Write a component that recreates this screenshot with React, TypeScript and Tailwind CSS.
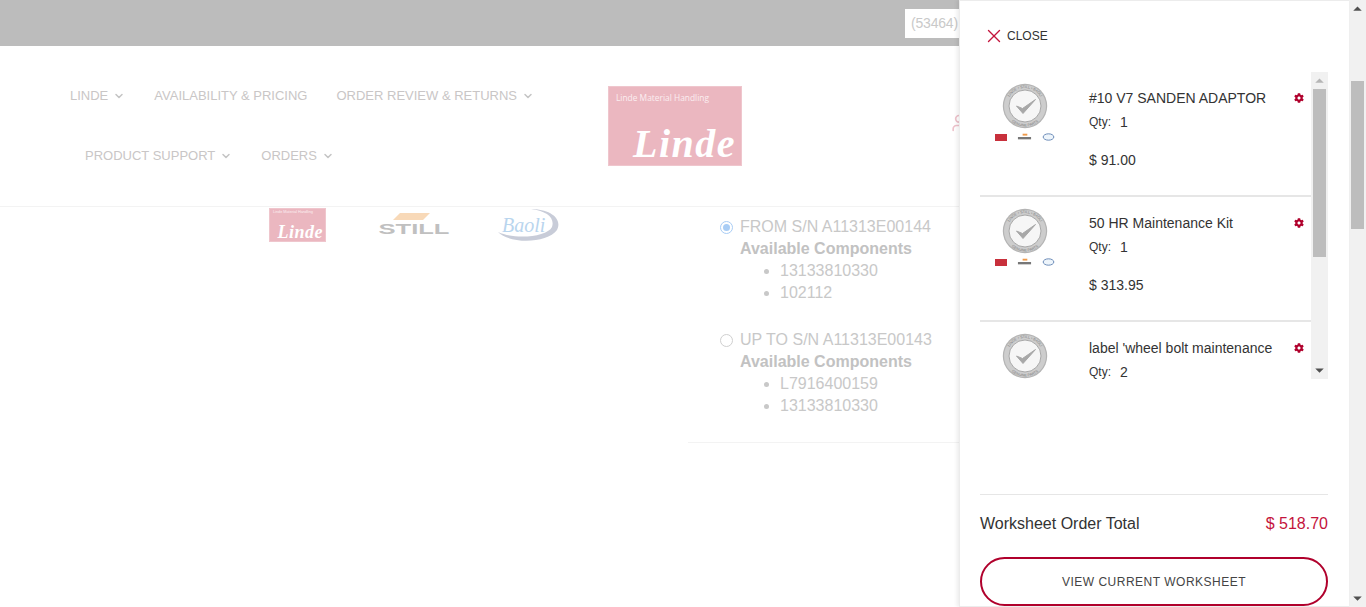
import { ChevronDown, X, User } from 'lucide-react';
import { FaCog } from 'react-icons/fa';
import { IoMdArrowDropdown, IoMdArrowDropup } from 'react-icons/io';

const font = { fontFamily: '"Liberation Sans", Arial, sans-serif' };

const navRows = [
  {
    pad: 'pl-[70px]',
    items: [
      { label: 'LINDE', caret: true },
      { label: 'AVAILABILITY & PRICING', caret: false },
      { label: 'ORDER REVIEW & RETURNS', caret: true },
    ],
  },
  {
    pad: 'pl-[85px]',
    items: [
      { label: 'PRODUCT SUPPORT', caret: true },
      { label: 'ORDERS', caret: true },
    ],
  },
];

const serials = [
  { label: 'FROM S/N A11313E00144', checked: true, parts: ['13133810330', '102112'] },
  { label: 'UP TO S/N A11313E00143', checked: false, parts: ['L7916400159', '13133810330'] },
];

// third row is cut off by the scroller, its price never shows
const cartItems = [
  { name: '#10 V7 SANDEN ADAPTOR', qty: 1, price: '$ 91.00' },
  { name: '50 HR Maintenance Kit', qty: 1, price: '$ 313.95' },
  { name: "label 'wheel bolt maintenance", qty: 2, price: '' },
];

const LindeLogo = () => (
  <div className="flex h-[80px] w-[134px] shrink-0 flex-col border border-[#efc6cd] bg-[#ebb7c0] pl-[7px] pt-[4px] pr-[5px]">
    <span className="whitespace-nowrap text-[8.4px] leading-[14px] text-[#fbeef0]" style={{ fontFamily: '"Open Sans", sans-serif' }}>
      Linde Material Handling
    </span>
    <span
      className="mt-auto self-end text-[40px] font-bold italic leading-[42px] tracking-[1.5px] text-white"
      style={{ fontFamily: '"Liberation Serif", serif' }}
    >
      Linde
    </span>
  </div>
);

const LindeSmall = () => (
  <div className="flex h-[34px] w-[57px] shrink-0 flex-col border border-[#efc6cd] bg-[#ebb7c0] pl-[3px] pt-[1px] pr-[2px]">
    <span className="whitespace-nowrap text-[3.8px] leading-[5px] text-[#fbeef0]" style={font}>
      Linde Material Handling
    </span>
    <span
      className="mt-auto self-end text-[18px] font-bold italic leading-[18px] tracking-[0.5px] text-white"
      style={{ fontFamily: '"Liberation Serif", serif' }}
    >
      Linde
    </span>
  </div>
);

const StillSmall = () => (
  <svg viewBox="0 0 72 24" className="h-[24px] w-[72px]">
    <polygon points="22,0 52,0 45,7 15,7" fill="#f8d9b8" />
    <text x="36" y="21" textAnchor="middle" fontSize="15" fontWeight="700" fill="#c0c0c0" textLength="71" lengthAdjust="spacingAndGlyphs" style={font}>
      STILL
    </text>
  </svg>
);

const BaoliSmall = () => (
  <svg viewBox="0 0 64 34" className="h-[34px] w-[64px]">
    <path d="M1 24 C12 36 50 36 60 22 C66 10 52 1 34 1 C50 3 58 10 55 19 C50 29 18 32 1 24 Z" fill="#c8ccd8" />
    <text x="5" y="24" fontSize="20" fontStyle="italic" fill="#b9d5ee" style={{ fontFamily: '"Liberation Serif", serif' }}>
      Baoli
    </text>
  </svg>
);

const PartsBadge = () => (
  <div className="flex w-[60px] flex-col items-center">
    <svg viewBox="0 0 46 46" className="h-[46px] w-[46px]">
      <circle cx="23" cy="23" r="22.2" fill="#b4b4b4" />
      <circle cx="23" cy="23" r="21" fill="#cdcdcd" />
      <circle cx="23" cy="23" r="16" fill="#f6f6f6" stroke="#a8a8a8" strokeWidth="1" />
      <path d="M14.5 23 L21 30.5 L33.5 16.5 L20.5 25.5 Z" fill="#a8a8a8" stroke="#a8a8a8" strokeWidth="1" strokeLinejoin="round" />
      <path id="badge-top" d="M5 23 A18 18 0 0 1 41 23" fill="none" />
      <path id="badge-bottom" d="M2.5 23 A20.5 20.5 0 0 0 43.5 23" fill="none" />
      <text fontSize="3.6" fill="#7d7d7d" style={font}>
        <textPath href="#badge-top" startOffset="50%" textAnchor="middle">LINDE • STILL • BAOLI</textPath>
      </text>
      <text fontSize="3.6" fill="#7d7d7d" style={font}>
        <textPath href="#badge-bottom" startOffset="50%" textAnchor="middle">GENUINE PARTS</textPath>
      </text>
    </svg>
    <div className="mt-[4px] flex w-full items-center justify-between">
      <div className="h-[7px] w-[12px] bg-[#c8303c]" />
      <svg viewBox="0 0 16 8" className="h-[8px] w-[15px]">
        <rect x="6" y="0.5" width="5" height="2" fill="#ef9a4a" />
        <rect x="1" y="4" width="14" height="2.5" fill="#777" />
      </svg>
      <svg viewBox="0 0 14 9" className="h-[8px] w-[13px]">
        <ellipse cx="7" cy="4.5" rx="6" ry="3.6" fill="#eef5fb" stroke="#5d7fb0" strokeWidth="1" />
      </svg>
    </div>
  </div>
);

const CartRow = ({ item }: { item: (typeof cartItems)[number] }) => (
  <div className="flex h-[125px] shrink-0 border-b-2 border-[#e6e6e6] pl-[15px]">
    <div className="pt-[11px]">
      <PartsBadge />
    </div>
    <div className="ml-[34px] flex-1 pt-[17px]">
      <div className="flex items-center justify-between pr-[7px]">
        <span className="text-[14px] leading-[18px] text-[#333]">{item.name}</span>
        <FaCog className="h-[10px] w-[10px] text-[#b0002c]" />
      </div>
      <div className="mt-[6px] flex items-center text-[#333]">
        <span className="text-[12px] leading-[18px]">Qty:</span>
        <span className="ml-[9px] text-[14px] leading-[18px]">{item.qty}</span>
      </div>
      {item.price && <div className="mt-[20px] text-[14px] leading-[18px] text-[#333]">{item.price}</div>}
    </div>
  </div>
);

const ScrollTrack = ({ thumb, dark }: { thumb: string; dark: string }) => (
  <div className="flex w-[17px] shrink-0 flex-col items-center bg-[#f1f1f1]">
    <IoMdArrowDropup className={`h-[17px] w-[17px] shrink-0 ${dark}`} />
    <div className={`shrink-0 bg-[#bdbdbd] ${thumb}`} />
    <IoMdArrowDropdown className="mt-auto h-[17px] w-[17px] shrink-0 text-[#505050]" />
  </div>
);

const App = () => {
  return (
    <div className="flex h-[607px] w-full overflow-hidden bg-white" style={font}>
      <div className="relative min-w-0 flex-1">
        <div className="flex h-[46px] items-start justify-end bg-[#bcbcbc] pt-[9px] pr-[389px]">
          <div className="h-[29px] w-[55px] bg-white pl-[6px] text-[14px] leading-[29px] tracking-[-0.2px] text-[#c9c9c9]">(53464)</div>
        </div>

        <header className="flex h-[161px] border-b border-[#f3f3f3]">
          <nav className="w-[608px] shrink-0">
            {navRows.map((row) => (
              <div key={row.items[0].label} className={`flex h-[60px] items-center gap-[29px] pt-[40px] ${row.pad}`}>
                {row.items.map((item) => (
                  <span key={item.label} className="flex items-center whitespace-nowrap text-[13px] text-[#c9c6c6]">
                    {item.label}
                    {item.caret && <ChevronDown className="ml-[5px] h-[12px] w-[12px] text-[#c4c4c4]" strokeWidth={3} />}
                  </span>
                ))}
              </div>
            ))}
          </nav>
          <div className="pt-[40px]">
            <LindeLogo />
          </div>
          <User className="ml-[207px] mt-[67px] h-[20px] w-[20px] text-[#eec2cb]" />
        </header>

        <main className="flex">
          <div className="w-[688px] shrink-0 pl-[269px] pt-[1px]">
            <div className="flex items-center">
              <LindeSmall />
              <div className="ml-[52px]">
                <StillSmall />
              </div>
              <div className="ml-[47px]">
                <BaoliSmall />
              </div>
            </div>
          </div>
          <div className="flex-1 border-b border-[#f3f3f3] pl-[32px] pt-[9px] pb-[25px]">
            <div className="flex flex-col gap-[25px]">
              {serials.map((serial) => (
                <div key={serial.label} className="text-[16px] leading-[22px] text-[#c8c8c8]">
                  <div className="flex items-center">
                    <span className={`flex h-[13px] w-[13px] items-center justify-center rounded-full border ${serial.checked ? 'border-[#a9cdf5]' : 'border-[#cfcfcf]'}`}>
                      {serial.checked && <span className="h-[7px] w-[7px] rounded-full bg-[#a9cdf5]" />}
                    </span>
                    <span className="ml-[7px] whitespace-nowrap">{serial.label}</span>
                  </div>
                  <div className="pl-[20px] font-bold text-[#c2c2c2]">Available Components</div>
                  <ul className="list-disc pl-[60px]">
                    {serial.parts.map((part) => (
                      <li key={part}>{part}</li>
                    ))}
                  </ul>
                </div>
              ))}
            </div>
          </div>
        </main>

        <aside className="absolute inset-y-0 right-0 flex w-[390px] flex-col border-y border-l border-[#ececec] bg-white pl-[20px] pr-[21px] shadow-[-2px_0_4px_rgba(0,0,0,0.08)]">
          <button className="flex h-[71px] shrink-0 items-center pb-[2px] pl-[3px]">
            <X className="h-[22px] w-[22px] text-[#c4143c]" strokeWidth={1.5} />
            <span className="ml-[2px] text-[12px] text-[#333]">CLOSE</span>
          </button>

          <div className="flex h-[307px] shrink-0 overflow-hidden">
            <div className="flex min-w-0 flex-1 flex-col">
              {cartItems.map((item) => (
                <CartRow key={item.name} item={item} />
              ))}
            </div>
            <ScrollTrack thumb="h-[168px] w-[13px]" dark="text-[#b5b5b5]" />
          </div>

          <div className="mt-auto border-t border-[#e6e6e6]">
            <div className="flex h-[62px] items-center justify-between pb-[4px] text-[16px]">
              <span className="text-[#333]">Worksheet Order Total</span>
              <span className="text-[#c4143c]">$ 518.70</span>
            </div>
            <button className="h-[49px] w-full rounded-full border-2 border-[#b0002c] text-[12px] tracking-[0.5px] text-[#444]">
              VIEW CURRENT WORKSHEET
            </button>
          </div>
        </aside>
      </div>

      <ScrollTrack thumb="mt-[64px] h-[148px] w-[13px]" dark="text-[#505050]" />
    </div>
  );
};

export default App;
